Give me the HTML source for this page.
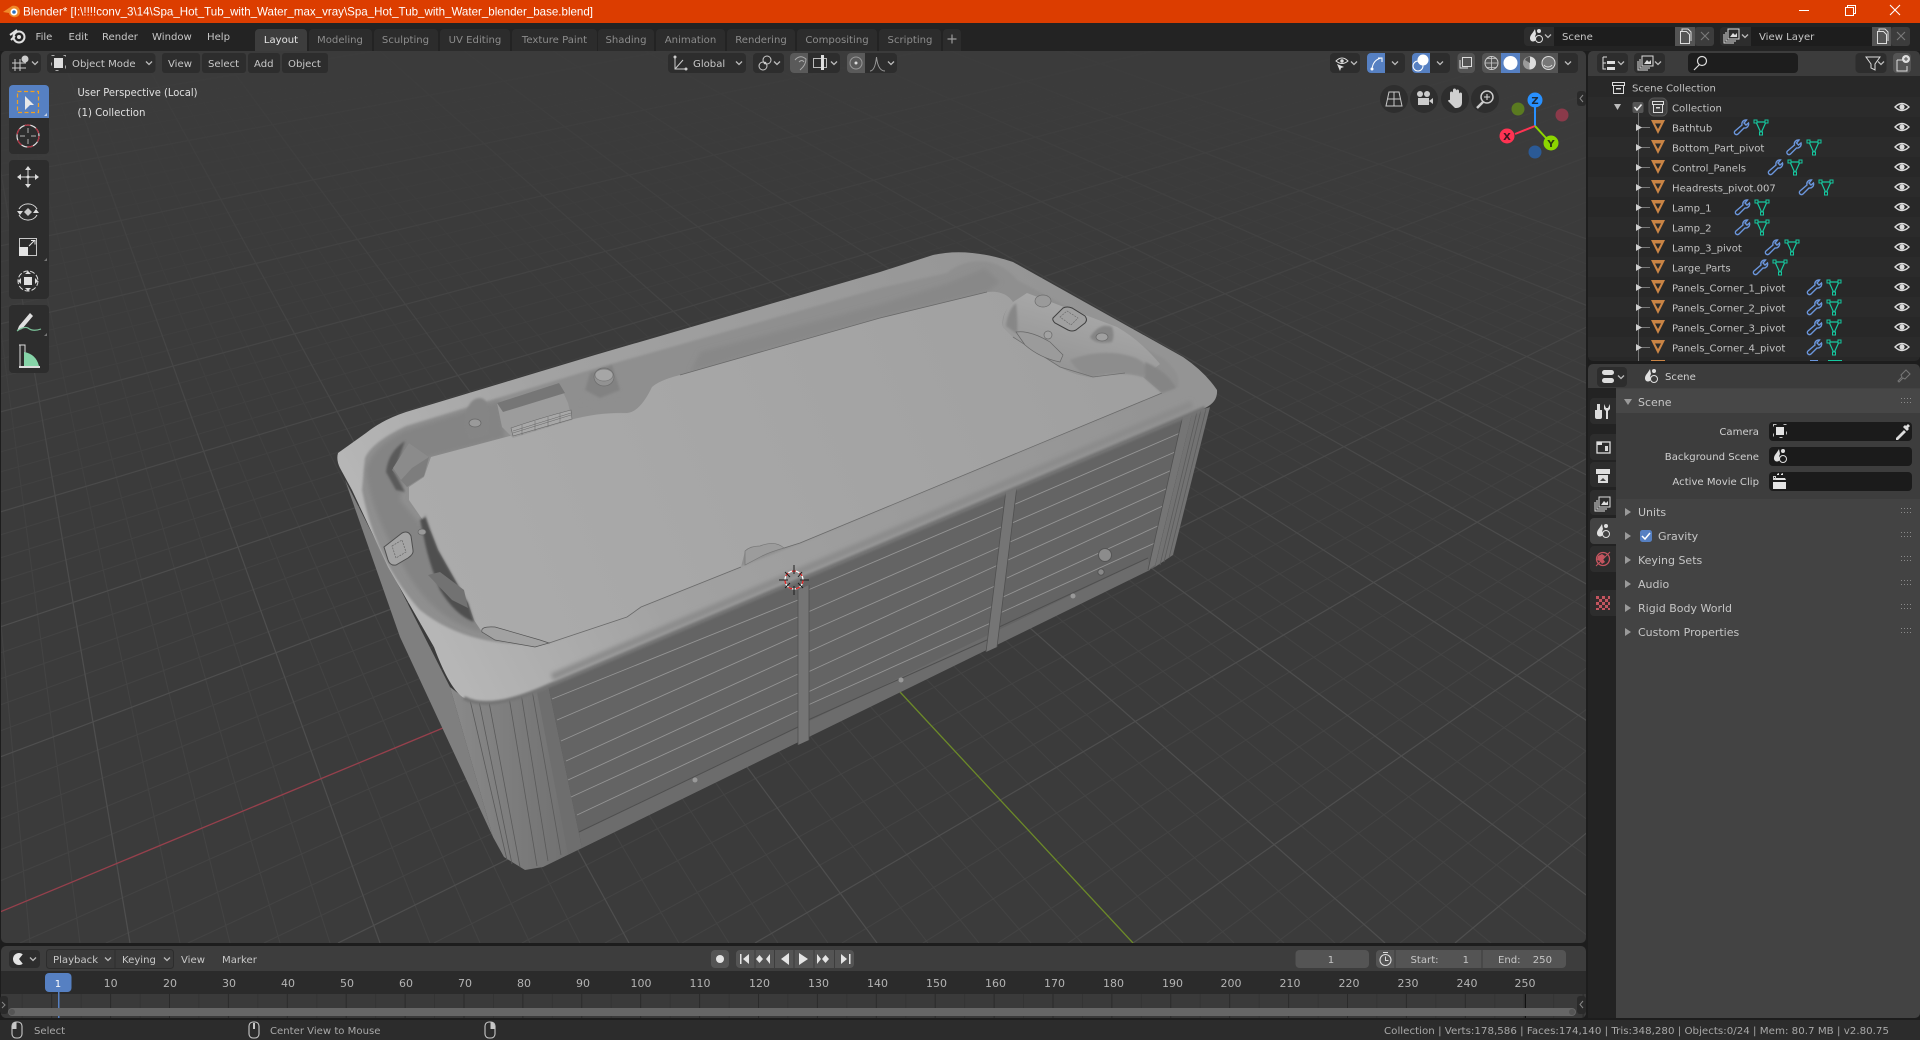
<!DOCTYPE html>
<html><head><meta charset="utf-8"><title>Blender</title>
<style>
html,body{margin:0;padding:0;background:#1d1d1d;overflow:hidden;width:1920px;height:1040px}
svg{display:block}
text{font-family:"DejaVu Sans","Liberation Sans",sans-serif;font-size:10.1px;fill:#c6c6c6}
.m{fill:#c8c8c8}.tb{fill:#8c8c8c;text-anchor:middle}.n{fill:#b4b4b4;text-anchor:middle;font-size:11px}
.o{fill:#c2c2c2;transform:translateY(.6px)}.s{fill:#a8a8a8}.r{text-anchor:end}.p{font-size:11px}
.b{fill:#2d2d2d}.h{fill:#545454}.bl{fill:#5680c2}.ic{fill:#d0d0d0}.st{fill:none;stroke:#d0d0d0;stroke-width:1.2}
</style></head><body>
<svg width="1920" height="1040" viewBox="0 0 1920 1040" xmlns="http://www.w3.org/2000/svg">
<defs>
<linearGradient id="fadeM" gradientUnits="userSpaceOnUse" x1="0" y1="60" x2="0" y2="620"><stop offset="0" stop-color="#3c3c3c"/><stop offset="1" stop-color="#4e4e4e"/></linearGradient>
<linearGradient id="fadeS" gradientUnits="userSpaceOnUse" x1="0" y1="60" x2="0" y2="620"><stop offset="0" stop-color="#3b3b3b"/><stop offset="1" stop-color="#434343"/></linearGradient>
<linearGradient id="rimG" gradientUnits="userSpaceOnUse" x1="380" y1="690" x2="1100" y2="300"><stop offset="0" stop-color="#bdbdbd"/><stop offset=".35" stop-color="#a2a2a2"/><stop offset="1" stop-color="#949494"/></linearGradient>
<linearGradient id="floorG" gradientUnits="userSpaceOnUse" x1="450" y1="600" x2="1100" y2="320"><stop offset="0" stop-color="#ababab"/><stop offset="1" stop-color="#a0a0a0"/></linearGradient>
<linearGradient id="cornG" gradientUnits="userSpaceOnUse" x1="450" y1="760" x2="590" y2="760"><stop offset="0" stop-color="#8a8a8a"/><stop offset="1" stop-color="#6c6c6c"/></linearGradient>
<linearGradient id="ledgeG" gradientUnits="userSpaceOnUse" x1="1060" y1="300" x2="1040" y2="370"><stop offset="0" stop-color="#a8a8a8"/><stop offset="1" stop-color="#939393"/></linearGradient>
<filter id="bl2" x="-20%" y="-20%" width="140%" height="140%"><feGaussianBlur stdDeviation="2"/></filter>
<filter id="bl1" x="-20%" y="-20%" width="140%" height="140%"><feGaussianBlur stdDeviation="1"/></filter>
<filter id="bl4" x="-20%" y="-50%" width="140%" height="200%"><feGaussianBlur stdDeviation="4"/></filter>
<pattern id="tlg" patternUnits="userSpaceOnUse" x="110.1" y="0" width="58.9" height="40"><rect x="0" width="1" height="40" fill="#2a2a2a"/><rect x="29.4" width="1" height="40" fill="#343434"/></pattern>
<g id="tri"><path fill="#c98445" fill-rule="evenodd" d="M-7-7H7L0 7ZM-3-3.500L0 2 3-3.500Z"/></g>
<g id="wr"><path fill="none" stroke="#6b96dc" stroke-width="1.400" d="M5.500-7A4 4 0 0 0 1-2L-6 4A2 2 0 0 0-3 7L3 1A4 4 0 0 0 7.500-4L5-2 3-4Z"/></g>
<g id="me"><path fill="none" stroke="#16c9a0" stroke-width="1.200" d="M-5-5H5L0 6Z"/><path fill="#282828" stroke="#16c9a0" d="M-7-7h3v3h-3zM4-7h3v3h-3zM-1.500 5h3v3h-3z"/></g>
<g id="eye"><path fill="none" stroke="#dcdcdc" stroke-width="1.400" d="M-7 0Q0-7 7 0Q0 7-7 0Z"/><circle r="2.600" fill="#dcdcdc"/></g>
<g id="grip" fill="#8a8a8a"><rect x="0" y="-3" width="1" height="1"/><rect x="3" y="-3" width="1" height="1"/><rect x="6" y="-3" width="1" height="1"/><rect x="9" y="-3" width="1" height="1"/><rect x="0" y="1" width="1" height="1"/><rect x="3" y="1" width="1" height="1"/><rect x="6" y="1" width="1" height="1"/><rect x="9" y="1" width="1" height="1"/></g>
<g id="scn"><path d="M-1-7C-3-3-6-1-6 2A3 3 0 0 0 0 3A5 5 0 0 1 0-2Z" fill="#e0e0e0"/><circle cx="3" cy="-5" r="2" fill="#e0e0e0"/><circle cx="3" cy="3" r="3.500" fill="none" stroke="#e0e0e0" stroke-width="1"/></g>
<g id="chev"><path d="M-3-1.500L0 1.500 3-1.500" fill="none" stroke="#bbb" stroke-width="1.300"/></g>
<g id="vl"><rect x="-4" y="-7" width="11" height="10" fill="none" stroke="#ddd"/><path d="M-2 1L1-3 3-1 5-3V1Z" fill="#ddd"/><path d="M-6-4V5H4M-8-2V7H2" fill="none" stroke="#ddd"/></g>
<g id="mouse"><rect x="-5" y="-8" width="10" height="16" rx="4" fill="none" stroke="#c8c8c8" stroke-width="1.100"/></g>
</defs>

<rect width="1920" height="1040" fill="#1d1d1d"/>
<rect width="1920" height="23" fill="#dc3d00"/>
<rect y="23" width="1920" height="28" fill="#232323"/>

<!-- title bar -->
<path d="M3 12L9 8 12 6C17 5 20 8 20 12 20 16 16 18 13 17 10 16 9 14 9 13Z" fill="#f08a2a"/><circle cx="14" cy="12" r="3.500" fill="#fff"/><circle cx="14" cy="12" r="1.800" fill="#2a6fc0"/>
<text x="23" y="15.500" textLength="570" lengthAdjust="spacingAndGlyphs" style="font-family:'Liberation Sans',sans-serif;font-size:12px;fill:#fff">Blender* [I:\!!!!conv_3\14\Spa_Hot_Tub_with_Water_max_vray\Spa_Hot_Tub_with_Water_blender_base.blend]</text>
<rect x="1799" y="10" width="10" height="1" fill="#fff"/>
<path d="M1845.500 7.500h8v8h-8zM1847.500 7.500v-2h8v8h-2" fill="none" stroke="#fff"/>
<path d="M1890 5L1900 15M1900 5L1890 15" stroke="#fff" stroke-width="1.100"/>

<!-- top bar -->
<circle cx="19" cy="37" r="5.500" fill="none" stroke="#e0e0e0" stroke-width="2"/><circle cx="19" cy="37" r="2" fill="#e0e0e0"/><path d="M10 35L17 30M11 40L15 36" stroke="#e0e0e0" stroke-width="2"/>
<text class="m" x="35.500" y="40">File</text><text class="m" x="68.500" y="40">Edit</text><text class="m" x="102" y="40">Render</text><text class="m" x="152" y="40">Window</text><text class="m" x="207" y="40">Help</text>
<path d="M255 51V33a4 4 0 0 1 4-4h44a4 4 0 0 1 4 4v18z" fill="#3d3d3d"/>
<g fill="#2c2c2c">
<path d="M309 51V33a4 4 0 0 1 4-4h55a4 4 0 0 1 4 4v18z"/><path d="M374 51V33a4 4 0 0 1 4-4h56a4 4 0 0 1 4 4v18z"/><path d="M440 51V33a4 4 0 0 1 4-4h62a4 4 0 0 1 4 4v18z"/><path d="M512 51V33a4 4 0 0 1 4-4h77a4 4 0 0 1 4 4v18z"/><path d="M598 51V33a4 4 0 0 1 4-4h48a4 4 0 0 1 4 4v18z"/><path d="M656 51V33a4 4 0 0 1 4-4h61a4 4 0 0 1 4 4v18z"/><path d="M727 51V33a4 4 0 0 1 4-4h60a4 4 0 0 1 4 4v18z"/><path d="M797 51V33a4 4 0 0 1 4-4h72a4 4 0 0 1 4 4v18z"/><path d="M879 51V33a4 4 0 0 1 4-4h54a4 4 0 0 1 4 4v18z"/><path d="M943 51V33a4 4 0 0 1 4-4h10a4 4 0 0 1 4 4v18z"/>
</g>
<text x="281" y="43" style="text-anchor:middle;fill:#e4e4e4">Layout</text>
<text class="tb" x="340" y="43">Modeling</text><text class="tb" x="405.500" y="43">Sculpting</text><text class="tb" x="475" y="43">UV Editing</text><text class="tb" x="554.500" y="43">Texture Paint</text><text class="tb" x="626" y="43">Shading</text><text class="tb" x="690.500" y="43">Animation</text><text class="tb" x="761" y="43">Rendering</text><text class="tb" x="837" y="43">Compositing</text><text class="tb" x="910" y="43">Scripting</text>
<path d="M947.500 39h9M952 34.500v9" stroke="#9a9a9a" stroke-width="1.200"/>

<!-- scene / view layer -->
<rect x="1524" y="27" width="190" height="19" rx="4" fill="#2d2d2d"/><rect x="1554" y="27" width="121" height="19" fill="#1d1d1d"/><rect x="1675" y="27" width="20" height="19" fill="#545454"/><rect x="1695" y="27" width="19" height="19" rx="3" fill="#3c3c3c"/>
<use href="#scn" x="1536" y="36"/><use href="#chev" x="1548" y="36"/>
<text x="1562" y="40">Scene</text>
<path d="M1680.500 31.500h6l3 3v9h-9zM1682 31v-2h6l3 3v9" fill="none" stroke="#ddd"/><path d="M1701 32l8 8M1709 32l-8 8" stroke="#7a7a7a" stroke-width="1.100"/>
<rect x="1720" y="27" width="190" height="19" rx="4" fill="#2d2d2d"/><rect x="1751" y="27" width="121" height="19" fill="#1d1d1d"/><rect x="1872" y="27" width="19" height="19" fill="#545454"/><rect x="1891" y="27" width="19" height="19" rx="3" fill="#3c3c3c"/>
<use href="#vl" x="1732" y="36"/><use href="#chev" x="1745" y="36"/>
<text x="1759" y="40">View Layer</text>
<path d="M1877.500 31.500h6l3 3v9h-9zM1879 31v-2h6l3 3v9" fill="none" stroke="#ddd"/><path d="M1897 32l8 8M1905 32l-8 8" stroke="#7a7a7a" stroke-width="1.100"/>

<!-- VIEWPORT -->
<clipPath id="vp"><rect x="1" y="51" width="1585" height="892" rx="5"/></clipPath>
<rect x="1" y="51" width="1585" height="892" rx="5" fill="#3b3b3b"/>
<g clip-path="url(#vp)">
<path fill="none" stroke="url(#fadeS)" d="M0 7L3060-400M0 18L3060-400M0 30L3060-400M0 41L3060-400M0 64L3060-400M0 77L3060-400M0 89L3060-400M0 102L3060-400M0 126L3060-400M0 139L3060-400M0 151L3060-400M0 164L3060-400M0 190L3060-400M0 204L3060-400M0 218L3060-400M0 232L3060-400M0 262L3060-400M0 277L3060-400M0 293L3060-400M0 308L3060-400M0 342L3060-400M0 359L3060-400M0 377L3060-400M0 394L3060-400M0 432L3060-400M0 452L3060-400M0 472L3060-400M0 492L3060-400M0 535L3060-400M0 558L3060-400M0 581L3060-400M0 604L3060-400M0 653L3060-400M0 679L3060-400M0 705L3060-400M0 731L3060-400M0 788L3060-400M0 819L3060-400M0 850L3060-400M0 881L3060-400M20 943L3060-400M106 943L3060-400M188 943L3060-400M264 943L3060-400M434 943L3060-400M522 943L3060-400M605 943L3060-400M682 943L3060-400M842 943L3060-400M923 943L3060-400M998 943L3060-400M1068 943L3060-400M1207 943L3060-400M1276 943L3060-400M1340 943L3060-400M1400 943L3060-400
M-89-365L-70 943M-89-365L-20 943M-89-365L30 943M-89-365L80 943M-89-365L180 943M-89-365L230 943M-89-365L280 943M-89-365L330 943M-89-365L430 943M-89-365L480 943M-89-365L530 943M-89-365L580 943M-89-365L679 943M-89-365L729 943M-89-365L778 943M-89-365L828 943M-89-365L928 943M-89-365L979 943M-89-365L1031 943M-89-365L1082 943M-89-365L1183 943M-89-365L1234 943M-89-365L1284 943M-89-365L1335 943M-89-365L1438 943M-89-365L1491 943M-89-365L1544 943M-89-365L1597 943M-89-365L1706 943M-89-365L1762 943M-89-365L1818 943M-89-365L1874 943M-89-365L1988 943M-89-365L2046 943M-89-365L2104 943M-89-365L2162 943M-89-365L2280 943M-89-365L2340 943M-89-365L2400 943M-89-365L2460 943M-89-365L2584 943M-89-365L2648 943M-89-365L2712 943M-89-365L2776 943M-89-365L2908 943M-89-365L2976 943M-89-365L3044 943M-89-365L3112 943M-89-365L3252 943M-89-365L3324 943M-89-365L3396 943M-89-365L3468 943"/>
<path fill="none" stroke="url(#fadeM)" stroke-width="1.200" d="M0-4L3060-400M0 52L3060-400M0 114L3060-400M0 176L3060-400M0 246L3060-400M0 324L3060-400M0 412L3060-400M0 512L3060-400M0 627L3060-400M0 757L3060-400M338 943L3060-400M755 943L3060-400M1133 943L3060-400M1455 943L3060-400
M-89-365L-120 943M-89-365L130 943M-89-365L380 943M-89-365L629 943M-89-365L877 943M-89-365L1385 943M-89-365L1650 943M-89-365L1930 943M-89-365L2220 943M-89-365L2520 943M-89-365L2840 943M-89-365L3180 943M-89-365L3540 943"/>
<path d="M0 912L443 728" stroke="#96404c" stroke-width="1.300"/>
<path d="M900 692L1133 943" stroke="#6c8a28" stroke-width="1.300"/>

<!-- TUB: faces -->
<path d="M345 480L450 687 493 837 400 637Z" fill="#7f7f7f"/>
<path d="M450 687L464 698 489 702 548 685 582 848 543 867 525 870 504 857 493 837Z" fill="url(#cornG)"/>
<path d="M470 700L507 860M479 701L512 864M489 702L520 867M509 697L537 866M521 693L548 861M532 690L561 855" stroke="#5a5a5a" stroke-width=".8" fill="none"/>
<path d="M536 687L548 685 582 848 568 854Z" fill="#6e6e6e"/>
<path d="M548 685L1192 413 1155 567 582 848Z" fill="#646464"/>
<path d="M579 832L1148 558 1150 570 582 848Z" fill="#6c6c6c"/>
<path d="M579 832L798 727M808 720L987 640M997 628L1148 558" stroke="#4f4f4f" fill="none"/>
<path d="M1192 413L1210 407 1173 555 1155 567Z" fill="#727272"/>
<path d="M1197 412L1160 565M1201 410L1164 562M1206 409L1169 558" stroke="#5c5c5c" stroke-width=".8" fill="none"/>
<!-- panel lines -->
<path fill="none" stroke="#959595" stroke-width=".9" d="M552 699L798 600M557 720L798 617M561 741L798 635M566 761L798 655M568 780L798 674M571 797L798 693M577 815L798 711
M808 590L1003 507M808 612L1001 527M808 632L1000 547M808 652L998 565M808 672L997 585M808 692L995 605M808 705L993 622
M1013 505L1180 433M1012 523L1175 452M1010 542L1172 470M1008 560L1168 488M1007 578L1165 505M1003 597L1160 525M1000 613L1157 542"/>
<!-- posts -->
<path d="M798 590L809 585 809 740 798 745Z" fill="#757575"/><path d="M798 590V745M809 585V740" stroke="#505050" stroke-width=".8"/>
<path d="M1006 490L1017 486 997 647 986 652Z" fill="#757575"/><path d="M1006 490L986 652M1017 486L997 647" stroke="#505050" stroke-width=".8"/>
<path d="M1183 415L1192 413 1155 565 1148 570Z" fill="#757575"/><path d="M1183 415L1148 570" stroke="#505050" stroke-width=".8"/>
<circle cx="695" cy="780" r="2.500" fill="#999"/><circle cx="901" cy="680" r="2.500" fill="#999"/><circle cx="1073" cy="596" r="2.500" fill="#999"/>
<circle cx="1105" cy="555" r="6.500" fill="#8c8c8c" stroke="#555"/><circle cx="1101" cy="572" r="3.200" fill="#888" stroke="#555"/>

<!-- TUB: rim -->
<path d="M338 453L366 433Q382 420 406 412L595 355 880 272 933 255Q968 247 1013 262L1183 357Q1205 372 1217 390 1218 402 1205 408L1192 413 548 686Q490 712 464 698 450 690 434 647L388 567 352 490 340 468Q336 460 338 453Z" fill="url(#rimG)"/>
<path d="M1205 408L548 686Q490 712 464 698" fill="none" stroke="#757575" stroke-width="4" filter="url(#bl1)"/>
<path d="M1192 404L552 677" fill="none" stroke="#8b8b8b" stroke-width="7" filter="url(#bl2)"/>
<!-- inner well -->
<path d="M365 458Q372 442 406 426L590 370 880 288 947 273Q965 258 990 262 1008 268 1017 280L1163 358Q1182 374 1178 387L1162 393 800 543 549 643Q470 650 420 610 375 560 362 490Z" fill="#8f8f8f" filter="url(#bl1)"/>
<path d="M700 352L880 304 945 284 985 268 1000 282 987 292 880 318 690 372Z" fill="#888888" filter="url(#bl2)"/>
<path d="M366 470Q372 446 406 430L500 400 505 438 431 457 409 463 400 500 431 537 470 603 482 632Q430 620 400 560 370 510 366 470Z" fill="#848484" filter="url(#bl2)"/>
<!-- floor -->
<path d="M431 457L506 437 570 420Q600 412 627 413 640 412 652 387 660 380 680 375L880 318 987 292Q1005 290 1013 302 1000 315 1003 327L1013 337 1060 367Q1075 376 1093 377 1120 370 1143 377L1162 393 800 543 784 548Q775 542 760 550L745 551 741 567 641 607 627 617 549 643Q520 636 482 632L474 620 468 603 438 550 431 532 418 513 409 500 409 487 424 477Z" fill="url(#floorG)"/>
<path d="M1162 393L800 543 784 548M741 567L641 607 627 617 549 643M987 292L880 318 680 375" fill="none" stroke="#6a6a6a" stroke-width=".8"/>
<path d="M745 551Q750 546 760 546 775 540 784 548 770 552 762 556L745 565Z" fill="#9c9c9c" stroke="#777" stroke-width=".7"/>
<!-- left details -->
<path d="M386 472Q388 452 405 441L394 472 405 492 396 490Z" fill="#5a5a5a" filter="url(#bl1)"/>
<path d="M392 470L409 443 429 457 424 476 407 487Z" fill="#7d7d7d"/>
<path d="M393 468L409 443 429 457 412 468 401 480Z" fill="#8b8b8b"/>
<path d="M420 520Q428 516 425 515L431 532 438 550 468 603 474 622Q455 615 440 590 428 560 424 538Z" fill="#505050" filter="url(#bl1)"/>
<path d="M428 575L440 572 464 590 468 608 452 600Z" fill="#727272"/>
<path d="M482 632Q480 626 495 627L540 640 549 643 535 647 495 640Z" fill="#a2a2a2" stroke="#555" stroke-width=".7"/>
<path d="M384 547L402 533Q408 530 411 536L413 550Q414 554 408 558L396 565Q390 566 388 560Z" fill="#a4a4a4" stroke="#4f4f4f"/>
<path d="M392 546L402 540 406 552 396 558Z" fill="none" stroke="#666" stroke-dasharray="2 1" stroke-width=".7"/>
<ellipse cx="422" cy="532" rx="4" ry="3" fill="#999" stroke="#666" stroke-width=".7"/>
<!-- back details -->
<path d="M466 413Q470 398 480 398 488 398 490 415L489 435 470 440Q462 430 466 413Z" fill="#858585" filter="url(#bl1)"/>
<ellipse cx="475" cy="423" rx="6" ry="4" fill="#9a9a9a" stroke="#666" stroke-width=".7"/>
<path d="M497 403L559 383 568 403 572 420 513 438 502 427Z" fill="#9c9c9c"/>
<path d="M497 403L559 383 565 393 503 412Z" fill="#767676"/>
<path d="M513 436L511 428Q540 418 571 410L572 419Z" fill="#a8a8a8" stroke="#666" stroke-width=".6"/>
<path d="M513 431L571 413M513 433L571 415M522 425V435M535 421V431M548 417V427M560 413V423" stroke="#666" stroke-width=".5" fill="none"/>
<path d="M580 405L620 400 628 412 602 412 582 400Z" fill="#8f8f8f" filter="url(#bl1)"/>
<path d="M590 373L612 365 620 390 600 398 585 390Z" fill="#828282" filter="url(#bl1)"/>
<ellipse cx="604" cy="377" rx="10" ry="9" fill="#929292" stroke="#6c6c6c" stroke-width=".7"/>
<ellipse cx="604" cy="375" rx="9" ry="6" fill="#a6a6a6" stroke="#777" stroke-width=".7"/>
<!-- right details -->
<path d="M1027 293L1117 327Q1140 340 1160 364 1150 372 1143 377 1120 370 1093 377 1075 376 1060 367L1013 337 1003 327Q1002 312 1013 302Z" fill="url(#ledgeG)"/>
<path d="M1006 326Q1008 310 1016 303 1018 320 1017 334Z" fill="#878787" filter="url(#bl1)"/>
<path d="M1070 360Q1100 348 1130 356 1145 360 1150 372L1143 377Q1120 370 1093 377 1080 376 1070 360Z" fill="#8d8d8d" filter="url(#bl1)"/>
<path d="M1145 362Q1168 372 1176 388L1162 393 1145 378Z" fill="#858585" filter="url(#bl1)"/>
<path d="M1013 337L1060 367 1093 377 1125 373" fill="none" stroke="#6e6e6e" stroke-width=".8"/>
<ellipse cx="1043" cy="301" rx="8" ry="6" fill="#9a9a9a" stroke="#6c6c6c" stroke-width=".7"/>
<path d="M1053 318L1063 308Q1067 306 1072 308L1085 316Q1088 320 1085 323L1076 330Q1072 332 1068 330L1055 323Q1052 320 1053 318Z" fill="#a0a0a0" stroke="#3f3f3f"/>
<path d="M1060 317L1067 311 1078 318 1071 325Z" fill="none" stroke="#666" stroke-width=".6" stroke-dasharray="2 1"/>
<circle cx="1048" cy="335" r="4" fill="#a2a2a2" stroke="#6a6a6a" stroke-width=".7"/>
<path d="M1090 337Q1100 322 1112 327 1115 335 1112 342 1095 345 1090 337Z" fill="#858585" filter="url(#bl1)"/>
<ellipse cx="1102" cy="337" rx="6" ry="4" fill="#a0a0a0" stroke="#6a6a6a" stroke-width=".7"/>
<path d="M1016 332Q1030 330 1050 342L1063 355 1060 362Q1040 358 1025 345Z" fill="#9b9b9b" stroke="#666" stroke-width=".7"/>

<!-- 3D cursor -->
<circle cx="794" cy="580" r="9" fill="none" stroke="#fff" stroke-width="1.300"/>
<circle cx="794" cy="580" r="9" fill="none" stroke="#e02020" stroke-width="1.300" stroke-dasharray="4 4"/>
<path d="M794 565V574M794 586V595M779 580H788M800 580H809M785 572L790 577M798 583L803 588M802 572L798 577M785 588L790 583" stroke="#1d1d1d" stroke-width="1"/>
</g>

<!-- left toolbar -->
<path d="M9 118V89a4 4 0 0 1 4-4h32a4 4 0 0 1 4 4v29z" class="bl"/>
<path d="M9 118h40v32a4 4 0 0 1-4 4H13a4 4 0 0 1-4-4z" class="b"/>
<rect x="17.500" y="91.500" width="21" height="21" fill="none" stroke="#f0a020" stroke-width="1.200" stroke-dasharray="4 2.500"/>
<path d="M25 96L34 105 30 105 25 110Z" fill="#e8e8e8"/><path d="M47 113v3h-3z" fill="#c8d4e8"/>
<circle cx="28" cy="136" r="11" fill="none" stroke="#e0e0e0" stroke-width="1.200"/><circle cx="28" cy="136" r="11" fill="none" stroke="#b03040" stroke-width="1.200" stroke-dasharray="6 6"/>
<path d="M28 128v5M28 139v5M20 136h5M31 136h5" stroke="#999" stroke-width="1.200"/>
<rect x="9" y="160" width="40" height="139" rx="4" class="b"/>
<path d="M28 166l3 4h-6zM28 188l3-4h-6zM17 177l4-3v6zM39 177l-4-3v6z" fill="#dcdcdc"/><path d="M28 170v14M21 177h14" stroke="#dcdcdc"/><circle cx="28" cy="177" r="1.500" fill="#dcdcdc"/>
<path d="M19 209A10 9 0 0 1 37 209M19 215A10 9 0 0 0 37 215" fill="none" stroke="#dcdcdc"/><path d="M28 208l4 4-4 4-4-4z" fill="#c8c8c8"/><path d="M17 211h6l-3 4zM33 213h6l-3-4z" fill="#dcdcdc"/>
<rect x="19.500" y="238.500" width="17" height="17" fill="none" stroke="#c8c8c8"/><rect x="19" y="247" width="9" height="9" fill="#e4e4e4"/><path d="M29 246l5-5M31 240.500h4v4" fill="none" stroke="#e4e4e4"/><path d="M47 258v3h-3z" fill="#777"/>
<circle cx="28" cy="281" r="10" fill="none" stroke="#dcdcdc" stroke-dasharray="5 2"/><rect x="24" y="277" width="8" height="8" fill="#e0e0e0"/><path d="M28 271l3 3h-6zM28 291l3-3h-6zM18 281l3-3v6zM38 281l-3-3v6z" fill="#dcdcdc"/>
<rect x="9" y="305" width="40" height="68" rx="4" class="b"/>
<path d="M19 326L30 313 33 316 22 329 17 331Z" fill="#e0e0e0"/><path d="M17 331Q24 326 28 328 33 332 41 329" fill="none" stroke="#7cc49a" stroke-width="1.200"/><path d="M47 333v3h-3z" fill="#777"/>
<path d="M20 345v23M19 345h6v17" fill="none" stroke="#ddd"/><path d="M24 352Q36 354 39 366H24Z" fill="#86d4a8"/><path d="M19 366h21v2H19z" fill="#ddd"/>

<text x="77.500" y="96" textLength="120" lengthAdjust="spacingAndGlyphs" style="fill:#e0e0e0;font-size:11px">User Perspective (Local)</text>
<text x="77.500" y="116" textLength="68" lengthAdjust="spacingAndGlyphs" style="fill:#e0e0e0;font-size:11px">(1) Collection</text>

<!-- viewport header -->
<rect x="9" y="53" width="32" height="20" rx="4" class="b"/>
<path d="M15 59v12M20 59v12M12 63h14M12 68h14" stroke="#ccc" fill="none"/><circle cx="25" cy="59" r="3.500" fill="#ccc"/><use href="#chev" x="35" y="63"/>
<rect x="47" y="53" width="108.500" height="20" rx="4" class="b"/>
<rect x="54" y="58" width="9" height="10" fill="#ddd"/><rect x="51.500" y="55.500" width="14" height="15" fill="none" stroke="#aaa" stroke-dasharray="3 9"/><text class="m" x="72" y="67">Object Mode</text><use href="#chev" x="149" y="63"/>
<rect x="162" y="53" width="38" height="20" rx="3" class="b"/><rect x="202" y="53" width="44" height="20" rx="3" class="b"/><rect x="248" y="53" width="32" height="20" rx="3" class="b"/><rect x="282" y="53" width="46" height="20" rx="3" class="b"/>
<text class="m" x="168" y="67">View</text><text class="m" x="208" y="67">Select</text><text class="m" x="254" y="67">Add</text><text class="m" x="288" y="67">Object</text>
<rect x="668" y="53" width="78" height="20" rx="4" class="b"/>
<path d="M675 58V69H686M675 69L683 60" fill="none" stroke="#ccc"/><circle cx="675" cy="57" r="1.500" fill="#ccc"/><circle cx="686" cy="69" r="1.500" fill="#ccc"/>
<text class="m" x="693" y="67">Global</text><use href="#chev" x="739" y="63"/>
<rect x="753" y="53" width="31" height="20" rx="4" class="b"/><circle cx="763" cy="66" r="4" fill="none" stroke="#ccc"/><circle cx="767" cy="60" r="4" fill="none" stroke="#ccc"/><circle cx="765" cy="63" r="1.300" fill="#ccc"/><use href="#chev" x="777" y="63"/>
<rect x="790" y="53" width="50" height="20" rx="4" class="b"/><path d="M790 57a4 4 0 0 1 4-4h14v20h-14a4 4 0 0 1-4-4z" fill="#5a5a5a"/>
<path d="M795 60Q800 54 806 59 806 65 800 70M799 62Q802 59 804 62" fill="none" stroke="#aaa"/><rect x="813.500" y="58.500" width="13" height="9" fill="none" stroke="#bbb"/><rect x="821" y="55" width="3" height="15" fill="#ddd"/><use href="#chev" x="834" y="63"/>
<rect x="847" y="53" width="50" height="20" rx="4" class="b"/><path d="M847 57a4 4 0 0 1 4-4h14v20h-14a4 4 0 0 1-4-4z" fill="#5a5a5a"/>
<circle cx="856" cy="63" r="6" fill="none" stroke="#999"/><circle cx="856" cy="63" r="1.500" fill="#ddd"/><path d="M870 71Q875 71 876.500 57 878 71 885 71" fill="none" stroke="#999"/><use href="#chev" x="891" y="63"/>

<rect x="1330" y="53" width="30" height="20" rx="4" class="b"/><path d="M1336 61Q1342 55 1348 61 1342 66 1336 61Z" fill="none" stroke="#ddd"/><circle cx="1342" cy="61" r="1.700" fill="#ddd"/><path d="M1337 64L1344 67 1341 68 1340 71Z" fill="#ddd"/><use href="#chev" x="1354" y="63"/>
<rect x="1367" y="53" width="38" height="20" rx="4" class="b"/><path d="M1367 57a4 4 0 0 1 4-4h14v20h-14a4 4 0 0 1-4-4z" class="bl"/><path d="M1372 69Q1373 60 1381 58M1378 58h4v4" fill="none" stroke="#fff"/><circle cx="1372" cy="69" r="1.500" fill="#fff"/><use href="#chev" x="1395" y="63"/>
<rect x="1412" y="53" width="38" height="20" rx="4" class="b"/><path d="M1412 57a4 4 0 0 1 4-4h14v20h-14a4 4 0 0 1-4-4z" class="bl"/><circle cx="1423" cy="60" r="5.500" fill="#fff"/><circle cx="1418" cy="66" r="5" fill="none" stroke="#fff"/><use href="#chev" x="1440" y="63"/>
<rect x="1457.500" y="53" width="17.500" height="20" rx="4" fill="#545454"/><rect x="1462.500" y="57.500" width="9" height="9" fill="none" stroke="#ddd"/><path d="M1460 60v8h8" fill="none" stroke="#ddd"/>
<rect x="1482" y="53" width="96" height="20" rx="4" class="b"/><path d="M1482 57a4 4 0 0 1 4-4h15v20h-15a4 4 0 0 1-4-4z" fill="#545454"/><rect x="1501" y="53" width="19" height="20" class="bl"/><rect x="1520" y="53" width="38" height="20" fill="#545454"/>
<circle cx="1491.500" cy="63" r="6.500" fill="none" stroke="#ccc"/><path d="M1485 63h13M1491.500 56.500v13M1487 58.500h9M1487 67.500h9" stroke="#ccc" fill="none" stroke-width=".8"/>
<circle cx="1510.500" cy="63" r="7" fill="#fff"/>
<circle cx="1529.500" cy="63" r="6.500" fill="#9a9a9a"/><path d="M1529.500 56.500a6.500 6.500 0 0 1 0 13z" fill="#ddd"/><path d="M1525 60a5 5 0 0 1 5-3v6z" fill="#555" />
<circle cx="1548.500" cy="63" r="6.500" fill="#777" stroke="#ddd"/><path d="M1544 65a5 5 0 0 0 8 0" stroke="#ddd" fill="none"/><use href="#chev" x="1568" y="63"/>

<!-- nav buttons -->
<circle cx="1394" cy="99" r="14" fill="#2e2e2e"/><circle cx="1424" cy="99" r="14" fill="#2e2e2e"/><circle cx="1455" cy="99" r="14" fill="#2e2e2e"/><circle cx="1485" cy="99" r="14" fill="#2e2e2e"/>
<path d="M1389 92h10l3 14h-16zM1394 92v14M1387 99h14" fill="none" stroke="#c8c8c8"/>
<circle cx="1420" cy="94" r="3" fill="#ccc"/><circle cx="1427" cy="94" r="3" fill="#ccc"/><rect x="1418" y="98" width="11" height="7" fill="#ccc"/><path d="M1429 101l4-3v6z" fill="#ccc"/>
<path d="M1450 100V93a1.500 1.500 0 0 1 3 0V90a1.500 1.500 0 0 1 3 0V91a1.500 1.500 0 0 1 3 0V94a1.500 1.500 0 0 1 3 0V103a5 5 0 0 1-5 5H1455L1448 101a1.500 1.500 0 0 1 2-1z" fill="#d0d0d0"/>
<circle cx="1487" cy="97" r="6" fill="none" stroke="#ccc" stroke-width="1.500"/><path d="M1487 94v6M1484 97h6" stroke="#ddd"/><path d="M1483 102l-6 6" stroke="#ccc" stroke-width="2.500"/>

<!-- orientation gizmo -->
<circle cx="1518" cy="109" r="6.500" fill="#5a7a20"/><circle cx="1562" cy="115" r="6.500" fill="#8b3a4a"/><circle cx="1535" cy="152" r="6.500" fill="#2b5a96"/>
<path d="M1535 126V107" stroke="#2890ff" stroke-width="2"/><path d="M1535 126L1515 134" stroke="#ff3352" stroke-width="2"/><path d="M1535 126L1546 138" stroke="#8cd600" stroke-width="2"/>
<circle cx="1535" cy="100" r="7.500" fill="#2890ff"/><circle cx="1507" cy="136" r="7.500" fill="#ff3352"/><circle cx="1551" cy="143" r="7.500" fill="#8cd600"/>
<text x="1535" y="104" style="text-anchor:middle;fill:#1b2a3a;font-weight:bold;font-size:10px">Z</text><text x="1507" y="140" style="text-anchor:middle;fill:#3a1520;font-weight:bold;font-size:10px">X</text><text x="1551" y="147" style="text-anchor:middle;fill:#2a3a10;font-weight:bold;font-size:10px">Y</text>
<rect x="1577" y="91" width="9" height="15" rx="3" fill="#2a2a2a"/><path d="M1583 95l-3 3.500 3 3.500" fill="none" stroke="#888"/>

<!-- OUTLINER -->
<rect x="1588" y="51" width="332" height="310" rx="5" fill="#282828"/>
<path d="M1588 76V56a5 5 0 0 1 5-5h322a5 5 0 0 1 5 5v20z" fill="#3c3c3c"/>
<g fill="#2b2b2b"><rect x="1588" y="97" width="332" height="20"/><rect x="1588" y="137" width="332" height="20"/><rect x="1588" y="177" width="332" height="20"/><rect x="1588" y="217" width="332" height="20"/><rect x="1588" y="257" width="332" height="20"/><rect x="1588" y="297" width="332" height="20"/><rect x="1588" y="337" width="332" height="20"/></g>
<rect x="1597" y="53" width="31" height="20" rx="4" class="b"/><path d="M1603 57h4M1603 57v12h3M1603 63h3" stroke="#ddd" fill="none"/><rect x="1607" y="61" width="8" height="3" fill="#ddd"/><rect x="1607" y="67" width="8" height="3" fill="#ddd"/><use href="#chev" x="1621" y="63"/>
<rect x="1634" y="53" width="31" height="20" rx="4" class="b"/><use href="#vl" x="1646" y="63"/><use href="#chev" x="1658" y="63"/>
<rect x="1688" y="53" width="110" height="20" rx="4" fill="#1d1d1d"/><circle cx="1702" cy="61" r="4.500" fill="none" stroke="#ddd" stroke-width="1.200"/><path d="M1699 65l-5 5" stroke="#ddd" stroke-width="1.200"/>
<rect x="1855.500" y="53" width="31" height="20" rx="4" class="b"/><path d="M1866 57h14l-5 7v6l-4-2v-4z" fill="none" stroke="#ddd"/><use href="#chev" x="1881" y="63"/>
<rect x="1893" y="53" width="18" height="20" rx="4" fill="#545454"/><path d="M1897 60v11h10v-5M1897 60h6" fill="none" stroke="#ddd"/><circle cx="1906" cy="59" r="4" fill="#ddd"/><path d="M1906 57v4M1904 59h4" stroke="#555"/>

<path d="M1612.500 82.500h12v3h-12zM1613.500 85.500v8h10v-8" fill="none" stroke="#ddd"/><rect x="1616" y="88" width="5" height="1.500" fill="#ddd"/>
<text class="o" x="1632" y="91">Scene Collection</text>
<path d="M1614 104h7l-3.500 6z" fill="#bbb"/>
<rect x="1632.500" y="102" width="11" height="11" rx="2" fill="#555"/><path d="M1634.500 107l2.500 3 4.500-5.500" fill="none" stroke="#eee" stroke-width="1.500"/>
<rect x="1649" y="98" width="18" height="18" rx="5" fill="#3f3f3f" stroke="#555"/>
<path d="M1652.500 101.500h11v3h-11zM1653.500 104.500v8h9v-8" fill="none" stroke="#ddd"/><rect x="1656" y="107" width="4" height="1.500" fill="#ddd"/>
<text class="o" x="1672" y="111">Collection</text>
<use href="#eye" x="1902" y="107"/>
<path d="M1638.500 113V361" stroke="#777"/>
<g stroke="#777"><path d="M1638 127.500h12M1638 147.500h12M1638 167.500h12M1638 187.500h12M1638 207.500h12M1638 227.500h12M1638 247.500h12M1638 267.500h12M1638 287.500h12M1638 307.500h12M1638 327.500h12M1638 347.500h12"/></g>
<g fill="#ccc"><path d="M1636 124l6 3.500-6 3.500zM1636 144l6 3.500-6 3.500zM1636 164l6 3.500-6 3.500zM1636 184l6 3.500-6 3.500zM1636 204l6 3.500-6 3.500zM1636 224l6 3.500-6 3.500zM1636 244l6 3.500-6 3.500zM1636 264l6 3.500-6 3.500zM1636 284l6 3.500-6 3.500zM1636 304l6 3.500-6 3.500zM1636 324l6 3.500-6 3.500zM1636 344l6 3.500-6 3.500z"/></g>
<g>
<use href="#tri" x="1658" y="127"/><text class="o" x="1672" y="131">Bathtub</text><use href="#wr" x="1741" y="127"/><use href="#me" x="1761" y="127"/><use href="#eye" x="1902" y="127"/>
<use href="#tri" x="1658" y="147"/><text class="o" x="1672" y="151">Bottom_Part_pivot</text><use href="#wr" x="1793.500" y="147"/><use href="#me" x="1814" y="147"/><use href="#eye" x="1902" y="147"/>
<use href="#tri" x="1658" y="167"/><text class="o" x="1672" y="171">Control_Panels</text><use href="#wr" x="1775" y="167"/><use href="#me" x="1795" y="167"/><use href="#eye" x="1902" y="167"/>
<use href="#tri" x="1658" y="187"/><text class="o" x="1672" y="191">Headrests_pivot.007</text><use href="#wr" x="1806" y="187"/><use href="#me" x="1826" y="187"/><use href="#eye" x="1902" y="187"/>
<use href="#tri" x="1658" y="207"/><text class="o" x="1672" y="211">Lamp_1</text><use href="#wr" x="1742" y="207"/><use href="#me" x="1762" y="207"/><use href="#eye" x="1902" y="207"/>
<use href="#tri" x="1658" y="227"/><text class="o" x="1672" y="231">Lamp_2</text><use href="#wr" x="1742" y="227"/><use href="#me" x="1762" y="227"/><use href="#eye" x="1902" y="227"/>
<use href="#tri" x="1658" y="247"/><text class="o" x="1672" y="251">Lamp_3_pivot</text><use href="#wr" x="1772" y="247"/><use href="#me" x="1792" y="247"/><use href="#eye" x="1902" y="247"/>
<use href="#tri" x="1658" y="267"/><text class="o" x="1672" y="271">Large_Parts</text><use href="#wr" x="1760" y="267"/><use href="#me" x="1780" y="267"/><use href="#eye" x="1902" y="267"/>
<use href="#tri" x="1658" y="287"/><text class="o" x="1672" y="291">Panels_Corner_1_pivot</text><use href="#wr" x="1814" y="287"/><use href="#me" x="1834" y="287"/><use href="#eye" x="1902" y="287"/>
<use href="#tri" x="1658" y="307"/><text class="o" x="1672" y="311">Panels_Corner_2_pivot</text><use href="#wr" x="1814" y="307"/><use href="#me" x="1834" y="307"/><use href="#eye" x="1902" y="307"/>
<use href="#tri" x="1658" y="327"/><text class="o" x="1672" y="331">Panels_Corner_3_pivot</text><use href="#wr" x="1814" y="327"/><use href="#me" x="1834" y="327"/><use href="#eye" x="1902" y="327"/>
<use href="#tri" x="1658" y="347"/><text class="o" x="1672" y="351">Panels_Corner_4_pivot</text><use href="#wr" x="1814" y="347"/><use href="#me" x="1834" y="347"/><use href="#eye" x="1902" y="347"/>
</g>
<rect x="1651" y="360" width="14" height="1" fill="#c98445"/><rect x="1810" y="360" width="8" height="1" fill="#6b96dc"/><rect x="1828" y="360" width="14" height="1" fill="#16c9a0"/>

<!-- PROPERTIES -->
<path d="M1588 388V369a5 5 0 0 1 5-5h322a5 5 0 0 1 5 5v19z" fill="#3c3c3c"/>
<rect x="1588" y="388" width="28" height="630" fill="#232323"/>
<path d="M1616 388H1920V1013a5 5 0 0 1-5 5H1616z" fill="#434343"/>
<rect x="1597" y="367" width="30" height="20" rx="4" class="b"/><rect x="1602" y="370" width="12" height="5" rx="2.500" fill="#ddd"/><rect x="1602" y="378" width="12" height="5" rx="2.500" fill="#ddd"/><use href="#chev" x="1621" y="377"/>
<use href="#scn" x="1651" y="376"/><text x="1665" y="380" style="fill:#d0d0d0">Scene</text>
<path d="M1898 381l4-4-1-2 5-5 4 4-5 5-2-1-4 4z" fill="none" stroke="#777"/>

<path d="M1590 402a4 4 0 0 1 4-4h22v26h-22a4 4 0 0 1-4-4z" class="b"/>
<path d="M1590 438a4 4 0 0 1 4-4h22v26h-22a4 4 0 0 1-4-4zM1590 466a4 4 0 0 1 4-4h22v25h-22a4 4 0 0 1-4-4zM1590 494a4 4 0 0 1 4-4h22v25h-22a4 4 0 0 1-4-4zM1590 550a4 4 0 0 1 4-4h22v26h-22a4 4 0 0 1-4-4zM1590 594a4 4 0 0 1 4-4h22v26h-22a4 4 0 0 1-4-4z" class="b"/>
<path d="M1590 522a4 4 0 0 1 4-4h22v26h-22a4 4 0 0 1-4-4z" fill="#434343"/>
<path d="M1597 404h3v6h2v7a2 2 0 0 1-2 2h-3a2 2 0 0 1-2-2v-7h2zM1604 404l2 4h2l2-4v5l-2 2v8h-2v-8l-2-2z" fill="#ddd"/>
<rect x="1597" y="442" width="13" height="11" fill="none" stroke="#ddd" stroke-width="1.300"/><rect x="1597" y="442" width="5" height="3" fill="#ddd"/><path d="M1605 446h3v5h-3z" fill="#ddd"/>
<path d="M1596 469h14v5h-14zM1598 475h10v8h-10z" fill="#ddd"/><path d="M1600 481l3-3 3 3z" fill="#444"/>
<use href="#vl" x="1603" y="504"/>
<use href="#scn" x="1603" y="531"/>
<circle cx="1603" cy="559" r="6.500" fill="none" stroke="#c4555f" stroke-width="1.300"/><path d="M1598 556l4-2 3 2-2 3 2 3-3 2-2-3-3-1z" fill="#c4555f"/><path d="M1596 566L1610 552" stroke="#c4555f"/>
<g fill="#c4555f"><rect x="1596" y="596" width="14" height="14"/></g>
<g fill="#3a2a2c"><rect x="1599" y="596" width="3" height="3"/><rect x="1605" y="596" width="3" height="3"/><rect x="1596" y="599" width="3" height="3"/><rect x="1602" y="599" width="3" height="3"/><rect x="1608" y="599" width="2" height="3"/><rect x="1599" y="602" width="3" height="3"/><rect x="1605" y="602" width="3" height="3"/><rect x="1596" y="605" width="3" height="3"/><rect x="1602" y="605" width="3" height="3"/><rect x="1608" y="605" width="2" height="3"/><rect x="1599" y="608" width="3" height="2"/><rect x="1605" y="608" width="3" height="2"/></g>

<rect x="1616" y="389" width="304" height="24" fill="#474747"/><rect x="1616" y="413" width="304" height="86" fill="#3d3d3d"/>
<path d="M1624 399h8l-4 6z" fill="#9a9a9a"/><text class="p" x="1638" y="406">Scene</text><use href="#grip" x="1901" y="401"/>
<text class="r" x="1759" y="435" style="fill:#d0d0d0">Camera</text><text class="r" x="1759" y="460" style="fill:#d0d0d0">Background Scene</text><text class="r" x="1759" y="485" style="fill:#d0d0d0">Active Movie Clip</text>
<rect x="1769" y="422" width="143" height="19" rx="4" fill="#1b1b1b"/><rect x="1769" y="447" width="143" height="19" rx="4" fill="#1b1b1b"/><rect x="1769" y="472" width="143" height="19" rx="4" fill="#1b1b1b"/>
<rect x="1776" y="427" width="8" height="8" fill="#e4e4e4"/><rect x="1773.500" y="424.500" width="13" height="13" fill="none" stroke="#bbb" stroke-dasharray="3 7"/>
<path d="M1896 438l8-8 2 2-8 8h-2zM1903 427l2-2 1 1 2-2 2 2-2 2 1 1-2 2z" fill="#ddd"/>
<use href="#scn" x="1780" y="456"/>
<rect x="1773" y="482" width="13" height="7" fill="#e4e4e4"/><path d="M1773 480h13l-1-2h-12zM1777 474l2-1v2h-2zM1781 474l2-1v2h-2z" fill="#e4e4e4"/><rect x="1773.500" y="476.500" width="2" height="3" fill="none" stroke="#ccc"/>
<g fill="#9a9a9a"><path d="M1625 508l6 4-6 4zM1625 532l6 4-6 4zM1625 556l6 4-6 4zM1625 580l6 4-6 4zM1625 604l6 4-6 4zM1625 628l6 4-6 4z"/></g>
<text class="p" x="1638" y="516">Units</text>
<rect x="1640" y="530" width="12" height="12" rx="2.500" fill="#5680c2"/><path d="M1642 536l3 3 5-6" fill="none" stroke="#fff" stroke-width="1.500"/><text class="p" x="1658" y="540">Gravity</text>
<text class="p" x="1638" y="564">Keying Sets</text><text class="p" x="1638" y="588">Audio</text><text class="p" x="1638" y="612">Rigid Body World</text><text class="p" x="1638" y="636">Custom Properties</text>
<use href="#grip" x="1901" y="511"/><use href="#grip" x="1901" y="535"/><use href="#grip" x="1901" y="559"/><use href="#grip" x="1901" y="583"/><use href="#grip" x="1901" y="607"/><use href="#grip" x="1901" y="631"/>

<!-- TIMELINE -->
<rect x="1" y="946" width="1585" height="72" rx="5" fill="#3d3d3d"/>
<rect x="1" y="971" width="1585" height="23" fill="#2b2b2b"/>
<path d="M1 994H1586V1013a5 5 0 0 1-5 5H6a5 5 0 0 1-5-5z" fill="#3a3a3a"/>
<rect x="1" y="994" width="1585" height="24" fill="url(#tlg)"/>
<rect x="1525" y="994" width="1" height="24" fill="#111"/>
<rect x="58" y="992" width="1.500" height="26" fill="#5680c2"/>
<rect x="8" y="1008" width="1568" height="8" rx="4" fill="#666"/><circle cx="12" cy="1012" r="3" fill="#555"/><circle cx="1572" cy="1012" r="3" fill="#555"/>
<rect x="9" y="950" width="31" height="18" rx="4" class="b"/><circle cx="19" cy="959" r="6" fill="#e4e4e4"/><path d="M19 959l4-5a6 6 0 0 1 0 10z" fill="#2d2d2d"/><use href="#chev" x="33" y="959"/>
<rect x="46.500" y="949.500" width="127" height="19" rx="3" fill="#3a3a3a" stroke="#2d2d2d"/><path d="M115 950v18" stroke="#2d2d2d"/>
<text class="m" x="53" y="963">Playback</text><use href="#chev" x="108" y="959"/><text class="m" x="122" y="963">Keying</text><use href="#chev" x="167" y="959"/>
<text class="m" x="181" y="963">View</text><text class="m" x="222" y="963">Marker</text>
<rect x="711" y="950" width="18" height="18" rx="4" fill="#545454"/><circle cx="720" cy="959" r="4" fill="#e4e4e4"/>
<rect x="736" y="950" width="118" height="18" rx="4" fill="#545454"/>
<path d="M755 950v18M774.500 950v18M794 950v18M814 950v18M834.500 950v18" stroke="#3d3d3d"/>
<g fill="#e4e4e4"><rect x="740" y="954" width="1.500" height="10"/><path d="M749 954v10l-6-5zM763 959l-3.500-4-3.500 4 3.500 4zM770 954v10l-4-5zM789 953v12l-8-6zM799 953l9 6-9 6zM817 954v10l4-5zM829 959l-3.500-4-3.500 4 3.500 4zM841 954v10l6-5z"/><rect x="849" y="954" width="1.500" height="10"/></g>
<rect x="1295.500" y="950" width="73.500" height="18" rx="4" fill="#545454"/><text x="1331" y="963" style="text-anchor:middle">1</text>
<rect x="1376" y="950" width="190" height="18" rx="4" fill="#545454"/><path d="M1395 950v18M1482 950v18" stroke="#3d3d3d"/>
<circle cx="1385.500" cy="960" r="5.500" fill="none" stroke="#ddd" stroke-width="1.100"/><path d="M1385.500 956.500v4h3M1383 952.500h5" fill="none" stroke="#ddd"/>
<text x="1410.500" y="963">Start:</text><text class="r" x="1469" y="963">1</text><text x="1498" y="963">End:</text><text class="r" x="1552" y="963">250</text>
<rect x="45" y="973" width="26.500" height="19" rx="4" fill="#5680c2"/><text x="58" y="987" style="text-anchor:middle;fill:#fff">1</text>
<g><text class="n" x="110.600" y="987">10</text><text class="n" x="170" y="987">20</text><text class="n" x="229" y="987">30</text><text class="n" x="288" y="987">40</text><text class="n" x="347" y="987">50</text><text class="n" x="406" y="987">60</text><text class="n" x="465" y="987">70</text><text class="n" x="524" y="987">80</text><text class="n" x="583" y="987">90</text><text class="n" x="641" y="987">100</text><text class="n" x="700" y="987">110</text><text class="n" x="759.500" y="987">120</text><text class="n" x="818.500" y="987">130</text><text class="n" x="877.500" y="987">140</text><text class="n" x="936.500" y="987">150</text><text class="n" x="995.500" y="987">160</text><text class="n" x="1054.500" y="987">170</text><text class="n" x="1113.500" y="987">180</text><text class="n" x="1172.500" y="987">190</text><text class="n" x="1231" y="987">200</text><text class="n" x="1290" y="987">210</text><text class="n" x="1349" y="987">220</text><text class="n" x="1408" y="987">230</text><text class="n" x="1467" y="987">240</text><text class="n" x="1525" y="987">250</text></g>
<rect x="0" y="996" width="8" height="18" rx="3" fill="#2a2a2a"/><path d="M2 1002l3 3-3 3" fill="none" stroke="#888"/>
<rect x="1577" y="996" width="9" height="18" rx="3" fill="#2a2a2a"/><path d="M1583 1001l-3 3.500 3 3.500" fill="none" stroke="#888"/>

<!-- STATUS -->
<rect y="1020" width="1920" height="20" fill="#2c2c2c"/>
<use href="#mouse" x="17" y="1030"/><path d="M12.500 1029v-3a4 4 0 0 1 4-4v7z" fill="#c8c8c8"/><text class="s" x="34" y="1034">Select</text>
<use href="#mouse" x="254" y="1030"/><rect x="253" y="1023" width="2" height="6" fill="#c8c8c8"/><text class="s" x="270" y="1034">Center View to Mouse</text>
<use href="#mouse" x="490" y="1030"/><path d="M490.500 1022a4 4 0 0 1 4 4v3h-4z" fill="#c8c8c8"/>
<text class="s" x="1384" y="1034" textLength="505" lengthAdjust="spacingAndGlyphs">Collection | Verts:178,586 | Faces:174,140 | Tris:348,280 | Objects:0/24 | Mem: 80.7 MB | v2.80.75</text>
</svg>
</body></html>
